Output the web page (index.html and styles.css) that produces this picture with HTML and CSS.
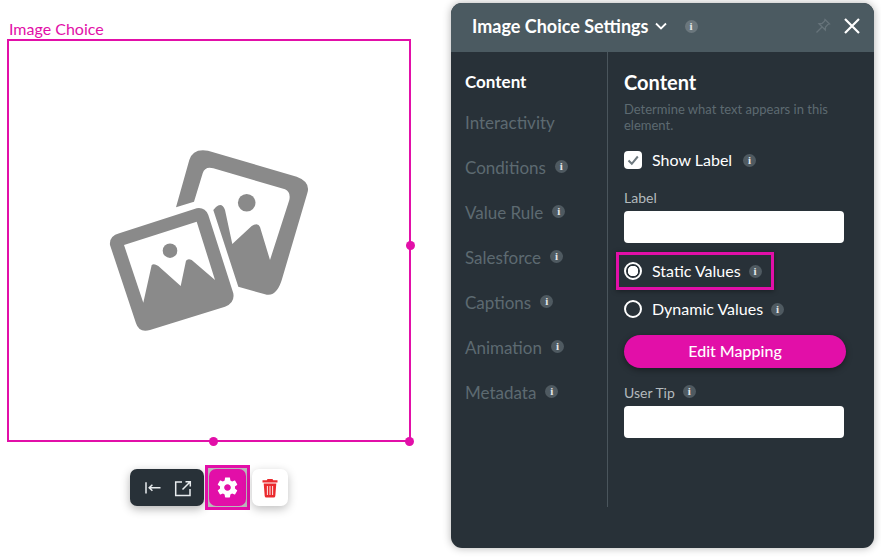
FILE: index.html
```html
<!DOCTYPE html>
<html lang="en">
<head>
<meta charset="utf-8">
<title>Image Choice Settings</title>
<link rel="stylesheet" href="styles.css">
</head>
<body>
<main class="stage">
  <section class="canvas">
    <div class="element-label">Image Choice</div>
    <div class="element-box">
      <svg class="placeholder" viewBox="100 140 220 200" width="220" height="200" aria-hidden="true">
        <path fill-rule="evenodd" d="M176 207.3 189.3 160Q193 148 208 150.7L296.7 176.7Q311 182 307.3 193.3L282.7 276.7Q277 298 265 294.3L238.3 286.7 213.3 210 216 207Q222 202 225 210L232.3 244 251.7 226Q258 222 260 227L270 260 289.3 200Q291 192 285 189.3L213.3 168.3Q205 166 202.7 173.3L194 201.7Z"/>
        <circle cx="246.7" cy="202.7" r="8.8"/>
        <path fill-rule="evenodd" d="M110 245Q109 236 119.3 233.3L196.7 208.3Q205 207 208.3 215L233.3 293.3Q235 303 225 306.7L150 330Q139 333 136 323.3ZM124 245 196.7 221.7 215 280 191.7 260Q188 258 186 260.7L180.7 286 158.3 266Q154 263 151.7 265L143.3 302.7Z"/>
        <circle cx="170" cy="250.7" r="7.3"/>
      </svg>
      <span class="handle handle-right"></span>
      <span class="handle handle-bottom"></span>
      <span class="handle handle-corner"></span>
    </div>
    <div class="toolbar">
      <div class="tool-group">
        <svg class="tool-icon" viewBox="0 0 20 20" width="20" height="20" aria-hidden="true"><path d="M3 4.200V15.500M17.500 9.800H6.200M9.400 6.800 6.200 9.800 9.400 12.800"/></svg>
        <svg class="tool-icon" viewBox="0 0 20 20" width="20" height="20" aria-hidden="true"><path d="M9 4H2.700V17.500H17V11M9.500 11.500 17 4M12.500 3.800H17.300V8.500"/></svg>
      </div>
      <div class="tool-highlight">
        <button class="tool-gear" type="button" aria-label="Settings">
          <svg viewBox="0 0 24 24" width="25" height="25" aria-hidden="true"><path fill="#fff" d="M19.140 12.940c.040-.300.060-.610.060-.940 0-.320-.020-.640-.070-.940l2.030-1.580c.180-.140.230-.410.120-.610l-1.920-3.320c-.120-.220-.370-.290-.590-.220l-2.390.960c-.500-.380-1.030-.700-1.620-.940l-.360-2.540c-.040-.240-.240-.410-.480-.410h-3.840c-.240 0-.430.170-.470.410l-.360 2.540c-.590.240-1.130.570-1.620.940l-2.390-.960c-.220-.080-.470 0-.590.220L2.740 8.870c-.120.210-.080.470.120.610l2.030 1.580c-.050.300-.090.630-.090.940s.020.640.070.940l-2.030 1.580c-.180.140-.230.410-.120.610l1.920 3.320c.120.220.370.290.590.220l2.390-.960c.500.380 1.030.700 1.620.940l.360 2.540c.050.240.240.410.480.410h3.840c.240 0 .440-.170.470-.410l.360-2.540c.590-.240 1.130-.560 1.620-.940l2.390.960c.220.080.470 0 .590-.220l1.920-3.320c.120-.220.070-.470-.120-.610l-2.010-1.580zM12 15.200c-1.760 0-3.200-1.440-3.200-3.200s1.440-3.200 3.200-3.200 3.200 1.440 3.200 3.200-1.440 3.200-3.200 3.200z"/></svg>
        </button>
      </div>
      <button class="tool-delete" type="button" aria-label="Delete">
        <svg viewBox="0 0 16 20" width="16" height="20" aria-hidden="true"><path fill="#ea2a2e" fill-rule="evenodd" d="M5.500 1h5l.7 1.300H15.500V4.500H.500V2.300H4.800ZM1.700 5.500h12.600L13.300 18q-.1 1.500-1.600 1.500H4.300q-1.500 0-1.600-1.500ZM4.900 8v9h.9V8ZM7.550 8v9h.9V8ZM10.200 8v9h.9V8Z"/></svg>
      </button>
    </div>
  </section>

  <aside class="panel">
    <header class="panel-head">
      <h1 class="panel-title">Image Choice Settings</h1>
      <svg class="chevron" viewBox="0 0 12 8" width="12" height="8" aria-hidden="true"><path d="M1 1.500 6 6.500 11 1.500"/></svg>
      <span class="info info-head">i</span>
      <svg class="pin" viewBox="0 0 16 16" width="16" height="16" aria-hidden="true"><path d="M10 1.500 14.500 6 12.800 6.500 10.500 9 10.300 12 4 5.700 7 5.500 9.500 3.200ZM6.800 9.200 1.500 14.500"/></svg>
      <svg class="close" viewBox="0 0 16 16" width="16" height="16" aria-hidden="true"><path d="M1 1 15 15M15 1 1 15"/></svg>
    </header>
    <div class="panel-body">
      <nav class="side">
        <a class="side-item side-active">Content</a>
        <a class="side-item">Interactivity</a>
        <a class="side-item">Conditions <span class="info">i</span></a>
        <a class="side-item">Value Rule <span class="info">i</span></a>
        <a class="side-item">Salesforce <span class="info">i</span></a>
        <a class="side-item">Captions <span class="info">i</span></a>
        <a class="side-item">Animation <span class="info">i</span></a>
        <a class="side-item">Metadata <span class="info">i</span></a>
      </nav>
      <div class="content">
        <h2 class="content-title">Content</h2>
        <p class="content-desc">Determine what text appears in this element.</p>
        <div class="row row-check">
          <span class="checkbox"><svg viewBox="0 0 18 18" width="18" height="18" aria-hidden="true"><path d="M4.500 9.500 7.800 12.800 13.800 5.500"/></svg></span>
          <span class="row-text">Show Label</span><span class="info">i</span>
        </div>
        <div class="field-label label-one">Label</div>
        <div class="input"></div>
        <div class="row row-static">
          <span class="radio radio-on"></span>
          <span class="row-text">Static Values</span><span class="info">i</span>
        </div>
        <div class="row row-dynamic">
          <span class="radio"></span>
          <span class="row-text">Dynamic Values</span><span class="info">i</span>
        </div>
        <button class="mapping" type="button">Edit Mapping</button>
        <div class="field-label label-two">User Tip <span class="info">i</span></div>
        <div class="input"></div>
      </div>
    </div>
  </aside>
</main>
</body>
</html>
```
FILE: styles.css
```css
*, *::after { box-sizing: border-box; }
html, body { margin: 0; height: 100%; }
body { background: #fff; font-family: Lato, "Open Sans", sans-serif; overflow: hidden; }
.stage { display: flex; width: 881px; height: 558px; }

.canvas { width: 451px; padding: 20px 0 0 7px; flex: none; }
.element-label { color: #e20fa8; font-size: 16px; line-height: 18px; padding-left: 2px; height: 19px; }
.element-box { position: relative; width: 404px; height: 403px; border: 2px solid #e20fa8; display: flex; align-items: center; justify-content: center; }
.placeholder { fill: #8a8a8a; margin: 0 0 2px 2px; }
.handle { position: absolute; width: 9px; height: 9px; border-radius: 50%; background: #e20fa8; }
.handle-right { right: -6px; top: 200px; }
.handle-bottom { left: 200px; bottom: -6px; }
.handle-corner { right: -5px; bottom: -6px; }

.toolbar { display: flex; align-items: center; margin: 23px 0 0 123px; }
.tool-group { width: 74px; height: 37px; padding-left: 2px; background: #283138; border-radius: 7px; display: flex; align-items: center; justify-content: center; gap: 10px; box-shadow: 0 3px 10px rgba(0,0,0,.3); }
.tool-icon { fill: none; stroke: #e8ecee; stroke-width: 1.500; }
.tool-highlight { width: 45px; height: 45px; margin-left: 1px; border: 3px solid #e20fa8; display: flex; align-items: center; justify-content: center; background: #b9b9b9; }
.tool-gear { width: 37px; height: 37px; padding: 0; border: 0; border-radius: 7px; background: #e20fa8; display: flex; align-items: center; justify-content: center; }
.tool-delete { width: 36px; height: 37px; margin-left: 2px; padding: 0; border: 0; border-radius: 7px; background: #fff; display: flex; align-items: center; justify-content: center; box-shadow: 0 3px 10px rgba(0,0,0,.25); }

.panel { width: 423px; height: 545px; margin-top: 3px; flex: none; border-radius: 11px; overflow: hidden; background: #283138; box-shadow: 0 0 8px rgba(0,0,0,.3); display: flex; flex-direction: column; }
.panel-head { height: 49px; flex: none; background: #4b5a61; display: flex; align-items: center; padding: 0 14px 3px 21px; color: #fff; }
.panel-title { margin: 0; font-size: 18px; font-weight: 700; }
.chevron { margin-left: 6px; fill: none; stroke: #fff; stroke-width: 1.800; }
.info { display: inline-flex; align-items: center; justify-content: center; flex: none; width: 13px; height: 13px; border-radius: 50%; background: #4f5a61; color: #e4e7e8; font: 700 11px/13px "Liberation Serif", serif; }
.info-head { margin-left: 18px; background: #6b777d; }
.pin { margin-left: auto; fill: none; stroke: #66737a; stroke-width: 1.300; }
.close { margin-left: 13px; fill: none; stroke: #fff; stroke-width: 2.200; }

.panel-body { flex: 1; display: flex; align-items: flex-start; }
.side { width: 157px; height: 455px; flex: none; border-right: 1px solid #4a555c; padding: 18px 0 0 14px; }
.side-item { display: flex; align-items: center; gap: 9px; height: 45px; color: #5d6a71; font-size: 17px; }
.side-active { height: 22px; margin-bottom: 8px; color: #fff; font-weight: 700; }
.side-item .info { position: relative; top: -1px; }

.content { width: 237px; padding: 17px 0 0 16px; color: #fff; }
.content-title { margin: 0; font-size: 20px; line-height: 26px; font-weight: 700; }
.content-desc { margin: 6px 0 0; font-size: 13px; line-height: 16px; color: #5d6a71; }
.row { display: flex; align-items: center; font-size: 16px; }
.row .info { margin-left: 8px; }
.row-text { margin-left: 10px; padding-bottom: 2px; }
.row-check { height: 18px; margin-top: 18px; }
.row-check .info { margin-left: 11px; }
.checkbox { width: 18px; height: 18px; background: #fff; border-radius: 4px; flex: none; display: block; }
.checkbox svg { display: block; fill: none; stroke: #6f7a80; stroke-width: 2; }
.field-label { font-size: 14px; line-height: 18px; color: #b4babd; }
.label-one { margin-top: 20px; height: 22px; }
.label-two { display: flex; align-items: flex-start; gap: 8px; margin-top: 16px; height: 22px; }
.label-two .info { position: relative; top: 1px; }
.input { width: 220px; height: 32px; background: #fff; border-radius: 4px; }
.row-static { position: relative; height: 38px; margin-top: 9px; }
.row-static::after { content: ""; position: absolute; left: -8px; top: 0; width: 158px; height: 38px; border: 3px solid #e20fa8; box-shadow: 0 1px 5px rgba(0,0,0,.4); }
.row-dynamic { height: 18px; margin-top: 10px; }
.radio { width: 18px; height: 18px; border: 2px solid #fff; border-radius: 50%; flex: none; display: block; }
.radio-on { background: radial-gradient(circle, #fff 0 5px, transparent 5.500px); }
.mapping { display: block; width: 222px; height: 33px; margin-top: 17px; padding: 0 0 2px; border: 0; border-radius: 17px; background: #e20fa8; color: #fff; font: 500 16px Lato, sans-serif; box-shadow: 0 2px 6px rgba(0,0,0,.4); }
```
